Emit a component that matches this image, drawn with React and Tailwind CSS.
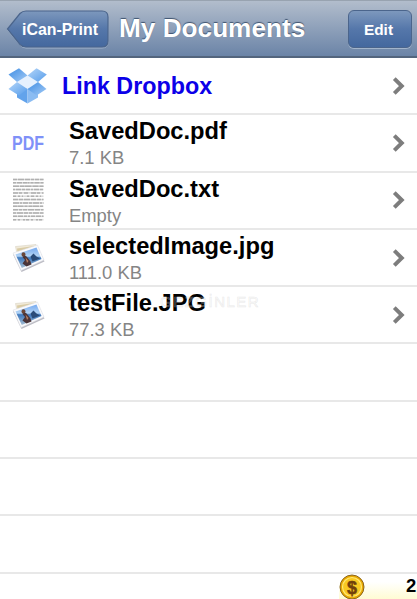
import React from 'react';

const rows = [
  { icon: 'dropbox', name: 'Link Dropbox' },
  { icon: 'pdf', name: 'SavedDoc.pdf', size: '7.1 KB' },
  { icon: 'txt', name: 'SavedDoc.txt', size: 'Empty' },
  { icon: 'photo', name: 'selectedImage.jpg', size: '111.0 KB' },
  { icon: 'photo', name: 'testFile.JPG', size: '77.3 KB', mark: 'GEZGİNLER' },
];

const textLines = [
  '4 1 6 1 5 1 3 1', '3 1 5 1 4 .5 2 1', '6 1 4 .5 7 1', '2 1 5 1 3 1 4 1', '5 1 3 2 4 3',
  '3 2 2 2 1 4 2 2', '5 1 4 1 6 1', '6 1 2 1 5 1 3 1', '4 .5 6 1 3 1', '5 1 3 1 4 1 6 1',
  '3 1 6 1 4 1', '4 1 5 1 3 1 2 1', '3 2 2 3 2 1',
];

function DropboxIcon() {
  return (
    <svg width="40" height="36" viewBox="8 67 40 36" className="shrink-0">
      <defs>
        <linearGradient id="flap" x1="0" y1="0" x2="1" y2="1">
          <stop offset="0" stopColor="#3f8de3" />
          <stop offset="1" stopColor="#a4cbf6" />
        </linearGradient>
        <linearGradient id="flapPale" x1="0" y1="0" x2="1" y2="1">
          <stop offset="0" stopColor="#b5d6f9" />
          <stop offset="1" stopColor="#559cea" />
        </linearGradient>
      </defs>
      <path d="M17 84.500 27.500 88V102.500L17 96.500z" fill="#62a3eb" />
      <path d="M38 84.500 27.500 88V102.500L38 96.500z" fill="#8bbcf2" />
      <path d="M27.500 74.500 38 81 27.500 88 17 81z" fill="#e6f1fe" />
      <path d="M8.500 73.500 19 67.300 27.500 74.500 17 81z" fill="url(#flap)" />
      <path d="M36.500 67.300 46.800 73.500 38 81 27.500 74.500z" fill="url(#flapPale)" />
      <path d="M17 81 27.500 88 19 94.500 8.500 88z" fill="url(#flapPale)" />
      <path d="M38 81 46.500 88 36.500 94.500 27.500 88z" fill="url(#flap)" />
    </svg>
  );
}

function PhotoIcon() {
  return (
    <svg width="34" height="30" viewBox="0 0 34 30" className="ml-1">
      <defs>
        <linearGradient id="sky" x1="0" y1="0" x2="0" y2="1">
          <stop offset="0" stopColor="#75a9f0" />
          <stop offset="0.42" stopColor="#b4d5f5" />
          <stop offset="0.5" stopColor="#3d78bd" />
          <stop offset="1" stopColor="#a7bfd3" />
        </linearGradient>
      </defs>
      <path d="M3.500 3.500 24 1.500 27 17 7 20z" fill="#f1ead9" stroke="#d8d3c5" strokeWidth=".6" />
      <path d="M5 5.500 22 3 22.500 9 6 13z" fill="#d9cba4" />
      <path d="M1 11.500 25.500 3 32.500 18.500 9.500 29z" fill="#bcbcc4" />
      <path d="M1 10 25.500 2 32 17 9 27.500z" fill="#fafafc" stroke="#dbdce2" strokeWidth=".5" />
      <path d="M3.500 11.500 24.500 4.500 29.500 16 9.800 25z" fill="url(#sky)" />
      <ellipse cx="11.500" cy="11.500" rx="2" ry="2.300" fill="#6b4738" />
      <path d="M10.500 14Q13 11.500 15 14L18.500 18.500 19.500 21.500 14.500 23.500 10.500 20.500 13 17z" fill="#4a3539" />
      <path d="M13.500 14.500 16.500 18 15 20z" fill="#b67d60" />
      <path d="M18.500 13.500 21.500 10.500 24.500 13.500 28 15.500 20.500 18.500z" fill="#2a4c79" />
    </svg>
  );
}

function FileIcon({ type }) {
  if (type === 'dropbox') return <DropboxIcon />;
  if (type === 'pdf') {
    return (
      <span className="text-[20.5px] leading-none font-bold text-[#7f91f8] inline-block scale-x-[0.78] origin-left ml-1">
        PDF
      </span>
    );
  }
  if (type === 'txt') {
    return (
      <svg width="32" height="44" viewBox="0 0 32 44" className="ml-1">
        {textLines.map((dash, i) => (
          <g key={dash} fill="none">
            <path d={`M1 ${1.5 + i * 3.35}H31.5`} stroke="#d9d9d9" strokeWidth="1.6" />
            <path d={`M1 ${1.5 + i * 3.35}H31.5`} stroke="#b0b0b0" strokeWidth="1.5" strokeDasharray={dash} />
          </g>
        ))}
      </svg>
    );
  }
  return <PhotoIcon />;
}

function Chevron() {
  return (
    <svg width="14" height="20" viewBox="0 0 14 20" className="shrink-0">
      <path d="M2.300 2.700 9.800 10 2.300 17.300" fill="none" stroke="#7d7d7d" strokeWidth="3.900" />
    </svg>
  );
}

function Header() {
  return (
    <header className="shrink-0 h-[58px] flex items-center bg-linear-to-b from-[#b2bdcc] to-[#6b84a7] border-t border-t-[#98a3b0] border-b-2 border-b-[#53657d] font-bold text-white [text-shadow:0_-1px_1px_#3f536f]">
      <button className="relative w-[103px] h-[38px] ml-1.5 flex items-center">
        <svg width="103" height="39" viewBox="0 0 103 39" className="absolute left-0 top-0">
          <defs>
            <linearGradient id="back" x1="0" y1="0" x2="0" y2="1">
              <stop offset="0" stopColor="#7d98bd" />
              <stop offset="0.5" stopColor="#5577aa" />
              <stop offset="1" stopColor="#44689e" />
            </linearGradient>
          </defs>
          <path d="M1.500 20 14 4Q16.500 1.800 20 1.800H96Q102 1.800 102 7V32Q102 38 96 38H20Q16.500 38 14 35z" fill="none" stroke="#a2b4cb" />
          <path d="M1.500 19 14 3.500Q16.500 1 20 1H96Q102 1 102 7V31Q102 37 96 37H20Q16.500 37 14 34.500z" fill="url(#back)" stroke="#4b658c" strokeWidth="1.200" />
        </svg>
        <span className="relative pl-4 pt-0.5 text-[15.9px] leading-none whitespace-nowrap">iCan-Print</span>
      </button>
      <h1 className="ml-[10px] w-[187px] text-[26.2px] leading-none whitespace-nowrap">My Documents</h1>
      <button className="ml-[41.5px] w-[64px] h-[38px] pt-0.5 pr-0.5 shrink-0 rounded-[6px] border border-[#4b658c] bg-linear-to-b from-[#7d98bd] via-[#5577aa] to-[#44689e] text-[15.4px] shadow-[0_1px_0_#a2b4cb]">
        Edit
      </button>
    </header>
  );
}

function Row({ row }) {
  return (
    <li className="relative h-[57.3px] flex items-center pl-2 pr-[11px] border-b-2 border-[#e8e8e8]">
      <div className={row.size ? 'w-[61px] flex items-center' : 'w-[54px] flex items-center'}>
        <FileIcon type={row.icon} />
      </div>
      <div className="flex-1 whitespace-nowrap">
        {row.size ? (
          <div className="pt-[3px]">
            <div className="text-[23.7px] leading-[27px] font-bold">{row.name}</div>
            <div className="text-[18.4px] leading-[25px] text-[#858585]">{row.size}</div>
          </div>
        ) : (
          <div className="pt-[2px] text-[23.3px] leading-none font-bold text-[#0c00e8]">{row.name}</div>
        )}
      </div>
      <Chevron />
      {row.mark && (
        <span className="absolute left-[160px] top-[7px] text-[15px] leading-none tracking-[1.5px] text-white/10 [-webkit-text-stroke:0.6px_#c8c8c866]">
          {row.mark}
        </span>
      )}
    </li>
  );
}

function Coin() {
  return (
    <svg width="26" height="26" viewBox="0 0 26 26">
      <circle cx="13" cy="13" r="12" fill="#e9a900" stroke="#8a6520" strokeWidth="1" />
      <circle cx="13" cy="13" r="9.500" fill="#f9c922" stroke="#ffe875" strokeWidth="1.200" />
      <text x="13" y="19.500" textAnchor="middle" fontSize="18" fontWeight="bold" fill="#70400b" stroke="#70400b" strokeWidth=".5">$</text>
    </svg>
  );
}

export default function App() {
  return (
    <div className="w-[417px] h-[599px] overflow-hidden flex flex-col bg-white text-black font-['Liberation_Sans',Arial,sans-serif]">
      <Header />
      <ul className="shrink-0">
        {rows.map((row) => (
          <Row key={row.name} row={row} />
        ))}
        {[1, 2, 3, 4].map((n) => (
          <li key={n} className="h-[57.3px] border-b-2 border-[#e8e8e8]" />
        ))}
      </ul>
      <footer className="flex-1 flex items-end justify-end">
        <div className="flex items-center w-[78px] h-[26px] bg-linear-to-b from-white from-30% to-[#fffbd0]">
          <Coin />
          <span className="ml-[41px] text-[18.5px] leading-none font-bold">2</span>
        </div>
      </footer>
    </div>
  );
}
